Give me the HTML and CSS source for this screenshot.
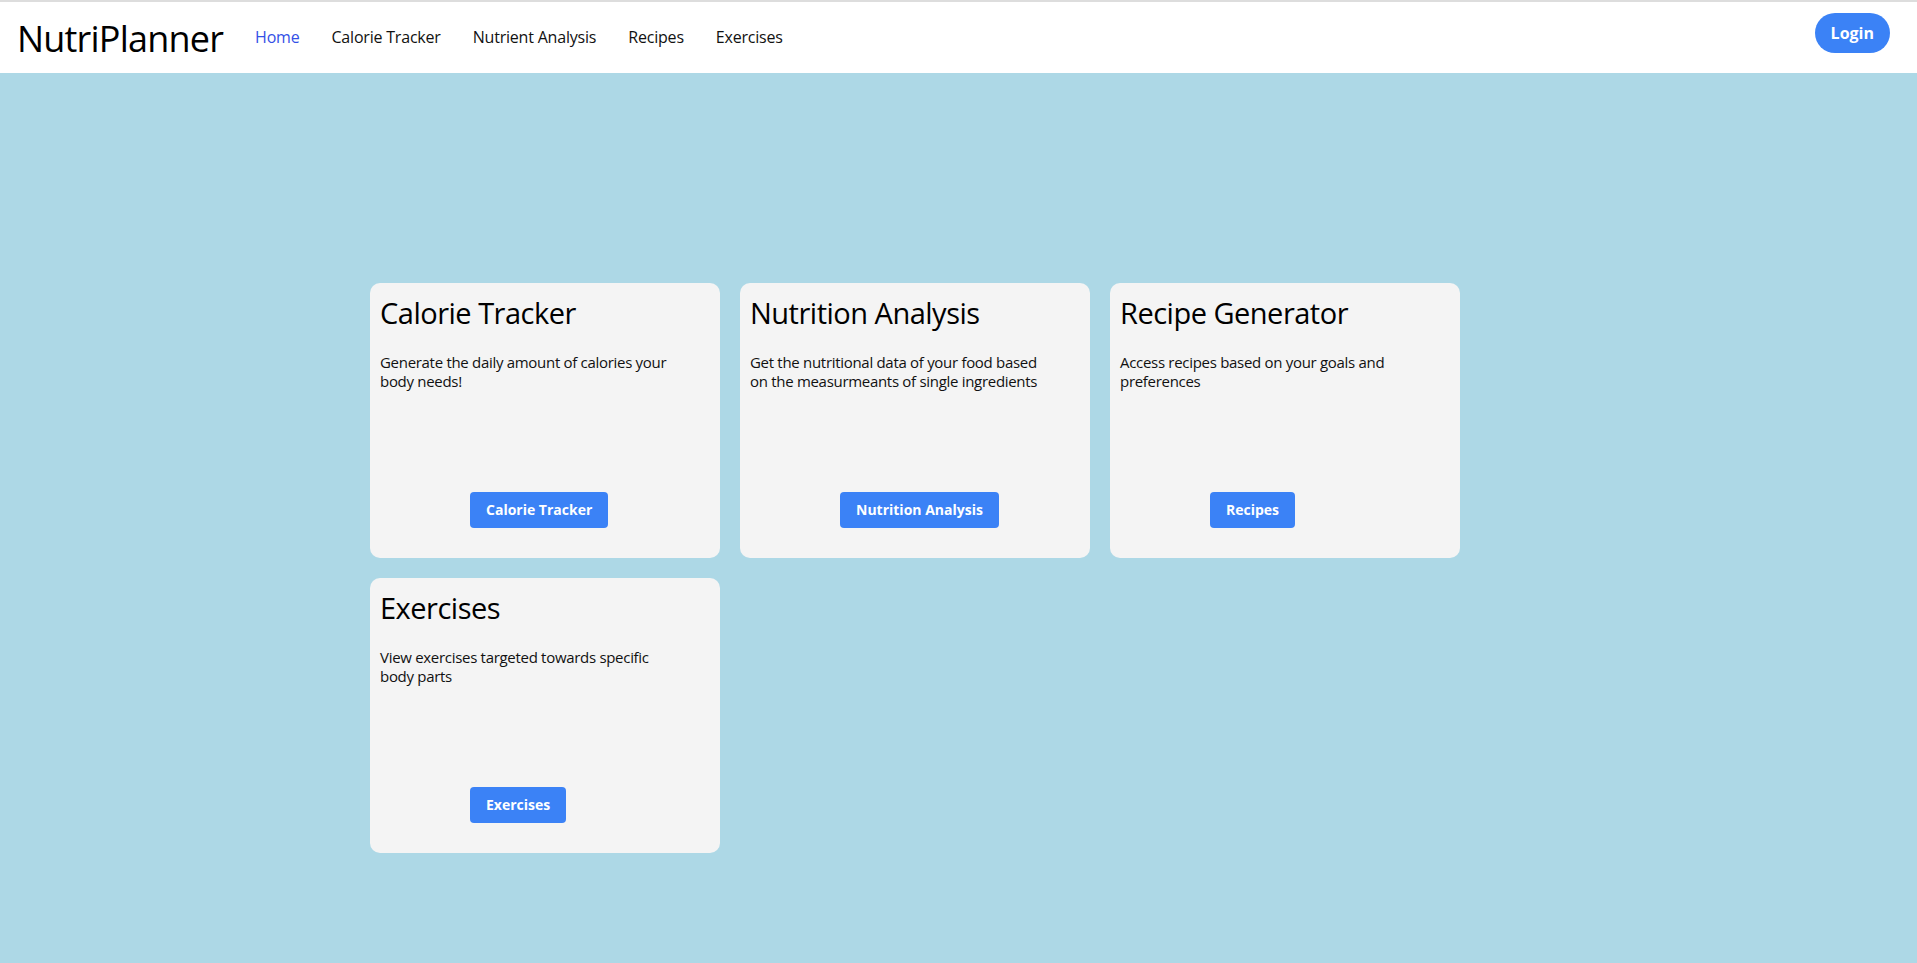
FILE: index.html
```html
<!DOCTYPE html>
<html lang="en">
<head>
<meta charset="utf-8">
<title>NutriPlanner</title>
<link rel="stylesheet" href="styles.css">
</head>
<body>
<header class="topbar">
  <div class="brand">NutriPlanner</div>
  <nav class="nav">
    <a class="nav-link active" href="#">Home</a>
    <a class="nav-link" href="#">Calorie Tracker</a>
    <a class="nav-link" href="#">Nutrient Analysis</a>
    <a class="nav-link" href="#">Recipes</a>
    <a class="nav-link" href="#">Exercises</a>
  </nav>
  <button class="login">Login</button>
</header>
<main class="content">
  <div class="grid">
    <div class="card">
      <h2 class="card-title">Calorie Tracker</h2>
      <p class="card-text">Generate the daily amount of calories your body needs!</p>
      <a class="btn" href="#">Calorie Tracker</a>
    </div>
    <div class="card">
      <h2 class="card-title">Nutrition Analysis</h2>
      <p class="card-text">Get the nutritional data of your food based on the measurmeants of single ingredients</p>
      <a class="btn" href="#">Nutrition Analysis</a>
    </div>
    <div class="card">
      <h2 class="card-title">Recipe Generator</h2>
      <p class="card-text">Access recipes based on your goals and preferences</p>
      <a class="btn" href="#">Recipes</a>
    </div>
    <div class="card">
      <h2 class="card-title">Exercises</h2>
      <p class="card-text">View exercises targeted towards specific body parts</p>
      <a class="btn" href="#">Exercises</a>
    </div>
  </div>
</main>
</body>
</html>
```
FILE: styles.css
```css
* { box-sizing: border-box; }
html, body { margin: 0; padding: 0; }
body {
  background: #add8e6;
  font-family: "Open Sans", "Noto Sans", sans-serif;
  color: #000;
  min-height: 963px;
}
.topbar {
  display: flex;
  align-items: flex-start;
  height: 73px;
  background: #fff;
  border-top: 2px solid #dddddd;
  padding: 0 27px 0 17px;
}
.brand {
  font-size: 36px;
  line-height: 40px;
  font-weight: 500;
  margin-top: 17px;
  color: #000;
  letter-spacing: -0.8px;
}
.nav {
  display: flex;
  margin-left: 16px;
  margin-top: 23px;
}
.nav-link {
  font-size: 16px;
  line-height: 24px;
  font-weight: 500;
  color: #111;
  text-decoration: none;
  padding: 0 16px;
  letter-spacing: -0.2px;
}
.nav-link.active { color: #3450e6; }
.login {
  margin-left: auto;
  margin-top: 11px;
  height: 40px;
  padding: 0 16px;
  border: none;
  border-radius: 20px;
  background: #3b82f6;
  color: #fff;
  font-family: inherit;
  font-size: 16px;
  font-weight: 700;
}
.content {
  padding: 210px 0 0 370px;
}
.grid {
  display: grid;
  grid-template-columns: repeat(3, 350px);
  gap: 20px;
}
.card {
  display: flex;
  flex-direction: column;
  align-items: flex-start;
  height: 275px;
  padding: 10px;
  background: #f4f4f4;
  border-radius: 10px;
}
.card-title {
  margin: 2px 0 0;
  font-size: 29px;
  line-height: 36px;
  font-weight: 400;
  letter-spacing: -0.5px;
}
.card-text {
  margin: 22px 0 0;
  font-size: 15px;
  line-height: 19px;
  max-width: 300px;
  color: #111;
  letter-spacing: -0.3px;
}
.btn {
  margin: auto 0 20px 90px;
  padding: 8px 16px;
  font-size: 14px;
  line-height: 20px;
  font-weight: 700;
  color: #fff;
  background: #3b82f6;
  border-radius: 4px;
  text-decoration: none;
}
```
